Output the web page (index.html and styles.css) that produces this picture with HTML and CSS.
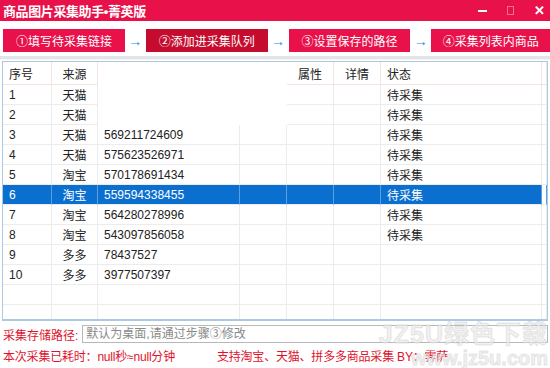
FILE: index.html
```html
<!DOCTYPE html>
<html lang="zh-CN">
<head>
  <meta charset="UTF-8">
  <title>商品图片采集助手•菁英版</title>
  <link rel="stylesheet" href="styles.css">
</head>
<body>
  <div class="app">
    <!-- title bar -->
    <div class="titlebar">
      <span class="title">商品图片采集助手•菁英版</span>
      <div class="winbtns">
        <span class="min"></span>
        <span class="max"></span>
        <span class="close">✕</span>
      </div>
    </div>

    <!-- steps -->
    <div class="steps">
      <button class="step">①填写待采集链接</button>
      <span class="arrow">→</span>
      <button class="step active">②添加进采集队列</button>
      <span class="arrow">→</span>
      <button class="step">③设置保存的路径</button>
      <span class="arrow">→</span>
      <button class="step">④采集列表内商品</button>
    </div>

    <div class="sep"></div>

    <!-- queue -->
    <div class="grid">
      <table>
        <colgroup>
          <col style="width:49px"><col style="width:46px"><col style="width:142px"><col style="width:47px">
          <col style="width:47px"><col style="width:47px"><col style="width:161px"><col>
        </colgroup>
        <thead>
          <tr>
            <th>序号</th><th class="c">来源</th><th class="void"></th><th class="void"></th>
            <th class="c">属性</th><th class="c">详情</th><th>状态</th><th></th>
          </tr>
        </thead>
        <tbody>
          <tr><td>1</td><td class="c">天猫</td><td class="void"></td><td class="void"></td><td></td><td></td><td>待采集</td><td></td></tr>
          <tr><td>2</td><td class="c">天猫</td><td class="void"></td><td class="void"></td><td></td><td></td><td>待采集</td><td></td></tr>
          <tr><td>3</td><td class="c">天猫</td><td>569211724609</td><td></td><td></td><td></td><td>待采集</td><td></td></tr>
          <tr><td>4</td><td class="c">天猫</td><td>575623526971</td><td></td><td></td><td></td><td>待采集</td><td></td></tr>
          <tr><td>5</td><td class="c">淘宝</td><td>570178691434</td><td></td><td></td><td></td><td>待采集</td><td></td></tr>
          <tr class="sel"><td>6</td><td class="c">淘宝</td><td>559594338455</td><td></td><td></td><td></td><td>待采集</td><td class="nosel"></td></tr>
          <tr><td>7</td><td class="c">淘宝</td><td>564280278996</td><td></td><td></td><td></td><td>待采集</td><td></td></tr>
          <tr><td>8</td><td class="c">淘宝</td><td>543097856058</td><td></td><td></td><td></td><td>待采集</td><td></td></tr>
          <tr><td>9</td><td class="c">多多</td><td>78437527</td><td></td><td></td><td></td><td></td><td></td></tr>
          <tr><td>10</td><td class="c">多多</td><td>3977507397</td><td></td><td></td><td></td><td></td><td></td></tr>
          <tr><td></td><td></td><td></td><td></td><td></td><td></td><td></td><td></td></tr>
          <tr><td></td><td></td><td></td><td></td><td></td><td></td><td></td><td></td></tr>
        </tbody>
      </table>
    </div>

    <!-- footer -->
    <div class="path">
      <label>采集存储路径:</label>
      <input type="text" placeholder="默认为桌面,请通过步骤③修改">
    </div>
    <div class="info">
      <span>本次采集已耗时：null秒≈null分钟</span>
      <span class="by">支持淘宝、天猫、拼多多商品采集 BY：霁萨</span>
    </div>

    <div class="mark">
      <div class="big">JZ5U绿色下载</div>
      <div class="url">www.jz5u.com</div>
    </div>
  </div>
</body>
</html>
```

FILE: styles.css
```css
body{
  margin:0; background:#fff;
  font-family:"Liberation Sans","Noto Sans CJK SC",sans-serif;
  font-size:12px; color:#222;
}
.app{position:relative; width:550px; height:368px; overflow:hidden;}

.titlebar{
  height:21px; background:#e8114a; color:#fff;
  display:flex; align-items:center; justify-content:space-between;
  padding:0 5px 0 3px;
}
.title{font-size:13px; font-weight:bold; letter-spacing:-.4px;}
.winbtns{display:flex; align-items:center; gap:20px;}
.min{width:9px; height:2px; background:#fff;}
.max{width:7px; height:9px; border:1px solid #f5708f; box-sizing:border-box;}
.close{font-size:13px; font-weight:bold;}

.steps{
  display:flex; align-items:center;
  margin-top:8px; padding-left:3px; height:23px;
}
.step{
  width:122px; height:23px; padding:0;
  background:#e8114a; color:#fff; border:none;
  font-family:inherit; font-size:12px;
}
.step.active{background:#c50c2e;}
.step:last-child{width:119px;}
.arrow{
  width:21px; text-align:center; color:#1c8be0;
  font-size:14px; font-weight:bold;
}

.sep{
  height:3px; margin-top:4px; background:#e4e4e4;
  border-bottom:1px solid #f4f4f4;
}

.grid{
  margin:1px 2px 0; height:257px; overflow:hidden;
  border:1px solid #a9c9e4; border-bottom-width:2px;
}
table{border-collapse:separate; border-spacing:0; table-layout:fixed; width:100%;}
th,td{
  height:19px; padding:0 0 0 6px; text-align:left; white-space:nowrap;
  border-right:1px solid #ececec; border-bottom:1px solid #ececec;
  font-weight:normal; overflow:hidden;
}
th{height:22px; background:#fff; border-color:#f3e3e3;}
th.c,td.c{text-align:center; padding:0;}
.void{border-color:#fff;}
tr.sel td{background:#0b6fd0; color:#fff; border-right-color:#5a9fe0;}
tr.sel td.nosel{background:#fff;}

.path{
  display:flex; align-items:center; gap:4px;
  margin-top:3px; padding-left:3px; height:20px;
}
.path label{color:#e0132e; white-space:nowrap;}
.path input{
  flex:1; height:18px; margin-right:2px; padding:0 3px;
  border:1px solid #b8b8b8; box-sizing:border-box;
  font-family:inherit; font-size:12px; color:#999;
}
.path input::placeholder{color:#8a8a8a;}

.info{
  display:flex; gap:42px; padding-left:3px; margin-top:3px;
  color:#e0132e; font-size:12px; letter-spacing:-.2px;
}

.mark{
  position:absolute; right:2px; bottom:0; text-align:right;
  color:rgba(236,236,236,.7); font-weight:bold; line-height:1;
  -webkit-text-stroke:1px rgba(190,190,190,.35);
}
.mark .big{font-size:25px; letter-spacing:1px;}
.mark .url{font-size:20px; margin-top:1px;}
```
